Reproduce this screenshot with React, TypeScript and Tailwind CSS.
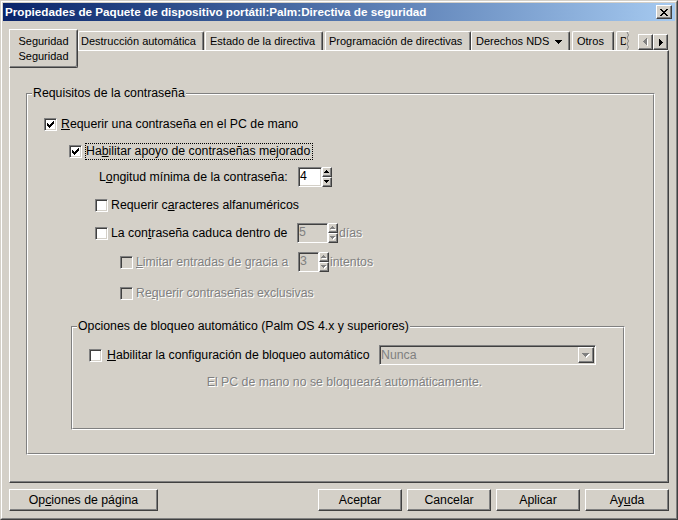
import React from "react";

// Win2000 classic bevels
const sunken =
  "border border-t-[#808080] border-l-[#808080] border-r-white border-b-white shadow-[inset_1px_1px_0_#404040,inset_-1px_-1px_0_#d4d0c8]";
const raised =
  "border border-t-white border-l-white border-r-[#404040] border-b-[#404040] shadow-[inset_-1px_-1px_0_#808080]";
const dim = "text-[#808080] [text-shadow:1px_1px_0_#fff]";

const CHECK = "M1 3h1v3H1zM2 4h1v3H2zM3 5h1v3H3zM4 4h1v3H4zM5 3h1v3H5zM6 2h1v3H6zM7 1h1v3H7z";
const UP5 = "M2 0h1v1H2zM1 1h3v1H1zM0 2h5v1H0z";
const DOWN5 = "M0 0h5v1H0zM1 1h3v1H1zM2 2h1v1H2z";
const DOWN7 = "M0 0h7v1H0zM1 1h5v1H1zM2 2h3v1H2zM3 3h1v1H3z";
const LEFT = "M0 3h1v1H0zM1 2h1v3H1zM2 1h1v5H2zM3 0h1v7H3z";
const RIGHT = "M0 0h1v7H0zM1 1h1v5H1zM2 2h1v3H2zM3 3h1v1H3z";
const CLOSE =
  "M0 0h2v1H0zM6 0h2v1H6zM1 1h2v1H1zM5 1h2v1H5zM2 2h4v1H2zM3 3h2v1H3zM2 4h4v1H2zM1 5h2v1H1zM5 5h2v1H5zM0 6h2v1H0zM6 6h2v1H6z";

const Glyph = ({ d, w, h, disabled = false }: { d: string; w: number; h: number; disabled?: boolean }) => (
  <svg width={w + 1} height={h + 1} viewBox={`0 0 ${w + 1} ${h + 1}`} shapeRendering="crispEdges">
    {disabled && <path d={d} fill="#fff" transform="translate(1 1)" />}
    <path d={d} fill={disabled ? "#808080" : "#000"} />
  </svg>
);

const Check = ({ checked = false, disabled = false }: { checked?: boolean; disabled?: boolean }) => (
  <span
    className={`relative block h-[13px] w-[13px] shrink-0 ${sunken} ${disabled ? "bg-[#d4d0c8]" : "bg-white"}`}
  >
    {checked && (
      <svg className="absolute left-px top-px" width="9" height="9" viewBox="0 0 9 9" shapeRendering="crispEdges">
        <path d={CHECK} fill={disabled ? "#808080" : "#000"} />
      </svg>
    )}
  </span>
);

const SpinBtn = ({ up = false, disabled = false }: { up?: boolean; disabled?: boolean }) => (
  <div className={`flex h-[10px] w-[10px] items-center justify-center bg-[#d4d0c8] ${raised}`}>
    <Glyph d={up ? UP5 : DOWN5} w={5} h={3} disabled={disabled} />
  </div>
);

const Spinner = ({ value, box, disabled = false }: { value: string; box: string; disabled?: boolean }) => (
  <div className="flex h-[20px]">
    <div
      className={`${box} h-[20px] ${sunken} pl-px pt-px leading-[14px] ${
        disabled ? "bg-[#d4d0c8] text-[#808080]" : "bg-white text-black"
      }`}
    >
      {value}
    </div>
    <div className="flex w-[10px] flex-col">
      <SpinBtn up disabled={disabled} />
      <SpinBtn disabled={disabled} />
    </div>
  </div>
);

const Group = ({
  title,
  className,
  children,
}: {
  title: string;
  className: string;
  children: React.ReactNode;
}) => (
  <div className={`relative border border-t-[#808080] border-l-[#808080] border-r-white border-b-white ${className}`}>
    <div className="h-full border border-t-white border-l-white border-r-[#808080] border-b-[#808080]">
      {children}
    </div>
    <span className="absolute -top-[8px] left-[5px] bg-[#d4d0c8] px-px leading-[14px] whitespace-nowrap">
      {title}
    </span>
  </div>
);

const TitleBar = () => (
  <div className="flex h-[18px] items-center justify-between bg-linear-to-r from-[#0a246a] to-[#a6caf0]">
    <span className="pl-[2px] text-[11.7px] font-bold leading-[18px] text-white whitespace-nowrap">
      Propiedades de Paquete de dispositivo portátil:Palm:Directiva de seguridad
    </span>
    <div className={`mr-[3px] flex h-[14px] w-[16px] items-center justify-center bg-[#d4d0c8] ${raised}`}>
      <svg width="8" height="7" viewBox="0 0 8 7" shapeRendering="crispEdges">
        <path d={CLOSE} fill="#000" />
      </svg>
    </div>
  </div>
);

const tabBase =
  "h-[19px] shrink-0 whitespace-nowrap border-t border-l border-r border-t-white border-l-white border-r-[#404040] shadow-[inset_-1px_0_0_#808080] rounded-tl-[2px] rounded-tr-[2px] pt-[2px] leading-[15px]";

const TabStrip = () => (
  <div className="flex h-[21px] items-end text-[11px]">
    <div className="relative z-10 h-[39px] w-[69px] shrink-0 self-start rounded-tr-[2px] rounded-br-[2px] border border-t-white border-l-white border-r-[#404040] border-b-[#404040] bg-[#d4d0c8] pt-[4px] text-center leading-[15px] shadow-[inset_-1px_-1px_0_#808080]">
      Seguridad
      <br />
      Seguridad
    </div>
    <div className={`${tabBase} w-[126px] pl-[2px]`}>Destrucción automática</div>
    <div className={`${tabBase} ml-px w-[118px] pl-[4px]`}>Estado de la directiva</div>
    <div className={`${tabBase} ml-[2px] w-[146px] pl-[3px]`}>Programación de directivas</div>
    <div className={`${tabBase} flex w-[99px] pl-[4px]`}>
      <span>Derechos NDS</span>
      <span className="ml-[6px] mt-[6px]">
        <svg width="7" height="4" viewBox="0 0 7 4" shapeRendering="crispEdges" className="block">
          <path d={DOWN7} fill="#000" />
        </svg>
      </span>
    </div>
    <div className={`${tabBase} ml-[2px] w-[42px] pl-[4px]`}>Otros</div>
    <div className="ml-[2px] flex h-[19px] w-[13px] shrink-0 border-t border-l border-t-white border-l-white rounded-tl-[2px]">
      <span className="w-[9px] overflow-hidden pl-[3px] pt-[2px] leading-[15px]">D</span>
      <svg width="3" height="18" viewBox="0 0 3 18" className="block">
        <path d="M1 0 L2.5 3 L1 6 L2.5 9 L1 12 L2.5 15 L1 18" stroke="#808080" fill="none" />
      </svg>
    </div>
    <div className="ml-[9px] flex">
      <div className={`flex h-[16px] w-[15px] items-center justify-center bg-[#d4d0c8] ${raised}`}>
        <Glyph d={LEFT} w={4} h={7} disabled />
      </div>
      <div className={`flex h-[16px] w-[15px] items-center justify-center bg-[#d4d0c8] ${raised}`}>
        <svg width="4" height="7" viewBox="0 0 4 7" shapeRendering="crispEdges">
          <path d={RIGHT} fill="#000" />
        </svg>
      </div>
    </div>
  </div>
);

const Panel = () => (
  <div className="h-[433px] border border-t-white border-l-white border-r-[#404040] border-b-[#404040] pl-[16px] pt-[42px] text-[12.3px] leading-[14px] shadow-[inset_-1px_-1px_0_#808080]">
    <Group title="Requisitos de la contraseña" className="h-[362px] w-[629px]">
      <div className="flex flex-col">
        <div className="mt-[19px] flex h-[20px] items-center pl-[16px]">
          <Check checked />
          <span className="ml-[4px]">
            <u>R</u>equerir una contraseña en el PC de mano
          </span>
        </div>

        <div className="mt-[7px] flex h-[20px] items-center pl-[41px]">
          <Check checked />
          <span className="ml-[3px] h-[17px] border border-dotted border-black pr-[2px] leading-[15px]">
            Ha<u>b</u>ilitar apoyo de contraseñas mejorado
          </span>
        </div>

        <div className="mt-[6px] flex h-[20px] items-center pl-[71px]">
          <span className="w-[199px]">
            L<u>o</u>ngitud mínima de la contraseña:
          </span>
          <Spinner value="4" box="w-[24px]" />
        </div>

        <div className="mt-[8px] flex h-[20px] items-center pl-[67px]">
          <Check />
          <span className="ml-[3px]">
            Requerir c<u>a</u>racteres alfanuméricos
          </span>
        </div>

        <div className="mt-[8px] flex h-[20px] items-center pl-[67px]">
          <Check />
          <span className="ml-[3px] w-[186px]">
            La con<u>t</u>raseña caduca dentro de
          </span>
          <Spinner value="5" box="w-[31px]" disabled />
          <span className={`ml-px ${dim}`}>días</span>
        </div>

        <div className="mt-[9px] flex h-[20px] items-center pl-[92px]">
          <Check disabled />
          <span className={`ml-[3px] w-[162px] ${dim}`}>
            <u>L</u>imitar entradas de gracia a
          </span>
          <Spinner value="3" box="w-[21px]" disabled />
          <span className={`ml-px ${dim}`}>intentos</span>
        </div>

        <div className="mt-[11px] flex h-[20px] items-center pl-[92px]">
          <Check disabled />
          <span className={`ml-[3px] ${dim}`}>
            Re<u>q</u>uerir contraseñas exclusivas
          </span>
        </div>

        <Group
          title="Opciones de bloqueo automático (Palm OS 4.x y superiores)"
          className="ml-[43px] mt-[23px] h-[104px] w-[554px]"
        >
          <div className="flex flex-col">
            <div className="mt-[17px] flex h-[20px] items-center pl-[16px]">
              <Check />
              <span className="ml-[5px] w-[272px]">
                <u>H</u>abilitar la configuración de bloqueo automático
              </span>
              <div
                className={`flex h-[20px] w-[217px] items-center justify-between bg-[#d4d0c8] pl-px pr-px ${sunken}`}
              >
                <span className="text-[#808080]">Nunca</span>
                <div className={`flex h-[16px] w-[16px] items-center justify-center bg-[#d4d0c8] ${raised}`}>
                  <Glyph d={DOWN7} w={7} h={4} disabled />
                </div>
              </div>
            </div>
            <div className={`mt-[7px] flex h-[20px] items-center justify-center pr-[7px] ${dim}`}>
              El PC de mano no se bloqueará automáticamente.
            </div>
          </div>
        </Group>
      </div>
    </Group>
  </div>
);

const Btn = ({ className, children }: { className: string; children: React.ReactNode }) => (
  <div className={`flex h-[22px] items-center justify-center bg-[#d4d0c8] ${raised} ${className}`}>{children}</div>
);

const Buttons = () => (
  <div className="mt-[6px] flex justify-between text-[12.3px] leading-[14px]">
    <Btn className="w-[149px]">
      Op<u>c</u>iones de página
    </Btn>
    <div className="flex gap-[5px]">
      <Btn className="w-[84px]">Aceptar</Btn>
      <Btn className="w-[84px]">Cancelar</Btn>
      <Btn className="w-[84px]">Aplicar</Btn>
      <Btn className="w-[84px]">
        Ay<u>u</u>da
      </Btn>
    </div>
  </div>
);

export default function App() {
  return (
    <div className="h-[520px] w-[678px] border border-t-[#d4d0c8] border-l-[#d4d0c8] border-r-[#404040] border-b-[#404040] bg-[#d4d0c8] font-['Liberation_Sans',Arial,sans-serif] text-black">
      <div className="h-full border border-t-white border-l-white border-r-[#808080] border-b-[#808080] p-px">
        <TitleBar />
        <div className="ml-[6px] mt-[8px] w-[660px]">
          <TabStrip />
          <Panel />
          <Buttons />
        </div>
      </div>
    </div>
  );
}
